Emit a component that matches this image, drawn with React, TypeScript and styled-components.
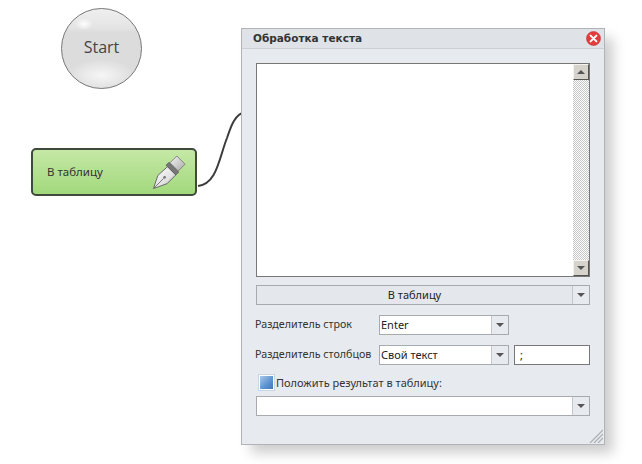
import React from 'react';
import styled, { createGlobalStyle } from 'styled-components';

const GlobalStyle = createGlobalStyle`
  html, body {
    margin: 0;
    padding: 0;
    background: #fff;
  }
`;

const uiFont = `"Noto Sans", "DejaVu Sans", sans-serif`;

function PenIcon() {
  return (
    <PenSvg viewBox="0 0 36 36">
      <defs>
        <linearGradient id="nib" x1="0" y1="0" x2="1" y2="1">
          <stop offset="0" stopColor="#ffffff" />
          <stop offset="0.6" stopColor="#e2e2e2" />
          <stop offset="1" stopColor="#999999" />
        </linearGradient>
        <linearGradient id="cap" x1="0" y1="0" x2="1" y2="1">
          <stop offset="0" stopColor="#f6f6f6" />
          <stop offset="1" stopColor="#a8a8a8" />
        </linearGradient>
      </defs>
      <path d="M1.5 34.5 L6 21 L16 12 L24.5 20.5 L15.5 29.5 Z" fill="url(#nib)" stroke="#666" strokeWidth="1" strokeLinejoin="round" />
      <path d="M2 34 L12 24" stroke="#666" strokeWidth="0.9" />
      <circle cx="13" cy="23" r="1.4" fill="#777" />
      <path d="M14.5 10.5 L17.5 7.5 L27.5 17.5 L24.5 20.5 Z" fill="#777" stroke="#555" strokeWidth="0.8" />
      <path d="M18.5 8 L25.5 1 L34 9.5 L27 16.5 Z" fill="url(#cap)" stroke="#777" strokeWidth="0.9" strokeLinejoin="round" />
    </PenSvg>
  );
}

function CloseIcon() {
  return (
    <CloseSvg viewBox="0 0 15 15">
      <circle cx="7.5" cy="7.5" r="7" fill="#e23c3c" stroke="#c63232" strokeWidth="0.6" />
      <path d="M4.6 4.6 L10.4 10.4 M10.4 4.6 L4.6 10.4" stroke="#fff" strokeWidth="2" strokeLinecap="round" />
    </CloseSvg>
  );
}

function Caret() {
  return <CaretGlyph />;
}

function Combo({ value, wide }: { value?: string; wide?: boolean }) {
  return (
    <ComboBox $wide={wide}>
      <ComboValue>{value}</ComboValue>
      <ComboArrow>
        <Caret />
      </ComboArrow>
    </ComboBox>
  );
}

function App() {
  return (
    <Canvas>
      <GlobalStyle />

      <Wire viewBox="0 0 60 90">
        <path d="M1 78 C20 76 22 50 30 30 C34 18 38 6 48 4" fill="none" stroke="#3c3c3c" strokeWidth="2" />
      </Wire>

      <StartNode>Start</StartNode>

      <TaskNode>
        <TaskTitle>В таблицу</TaskTitle>
        <PenIcon />
      </TaskNode>

      <Panel>
        <TitleBar>
          <Title>Обработка текста</Title>
          <CloseIcon />
        </TitleBar>

        <Body>
          <TextArea>
            <ScrollBar>
              <ScrollButton><ScrollUp /></ScrollButton>
              <ScrollTrack />
              <ScrollButton><Caret /></ScrollButton>
            </ScrollBar>
          </TextArea>

          <ActionButton>
            <ActionLabel>В таблицу</ActionLabel>
            <ComboArrow>
              <Caret />
            </ComboArrow>
          </ActionButton>

          <Row>
            <Label>Разделитель строк</Label>
            <Combo value="Enter" />
          </Row>

          <Row>
            <Label>Разделитель столбцов</Label>
            <Combo value="Свой текст" />
            <TextInput>;</TextInput>
          </Row>

          <CheckRow>
            <CheckBox />
            <CheckLabel>Положить результат в таблицу:</CheckLabel>
          </CheckRow>

          <Combo wide />
        </Body>

        <Grip viewBox="0 0 14 14">
          <path d="M1 14 L14 1 M5 14 L14 5 M9 14 L14 9" stroke="#a9adb2" strokeWidth="1.2" />
        </Grip>
      </Panel>
    </Canvas>
  );
}

const Canvas = styled.div`
  position: relative;
  width: 642px;
  height: 464px;
  overflow: hidden;
  background: #fff;
  font-family: ${uiFont};
`;

const Wire = styled.svg`
  position: absolute;
  left: 197px;
  top: 108px;
  width: 60px;
  height: 90px;
`;

const StartNode = styled.div`
  position: absolute;
  left: 61px;
  top: 8px;
  width: 81px;
  height: 81px;
  box-sizing: border-box;
  border-radius: 50%;
  border: 1px solid #777;
  padding-bottom: 4px;
  display: flex;
  align-items: center;
  justify-content: center;
  font-family: "Open Sans", sans-serif;
  font-size: 16px;
  color: #444;
  background:
    radial-gradient(ellipse 9px 6px at 28% 19%, rgba(255, 255, 255, 0.9), rgba(255, 255, 255, 0) 100%),
    radial-gradient(ellipse 34px 16px at 50% 84%, #f6f6f6 0%, rgba(246, 246, 246, 0) 100%),
    linear-gradient(#efefef 0%, #e4e4e4 24%, #dcdcdc 30%, #dcdcdc 100%);
`;

const TaskNode = styled.div`
  position: absolute;
  left: 31px;
  top: 148px;
  width: 166px;
  height: 48px;
  box-sizing: border-box;
  border: 2px solid #3f4a3c;
  border-radius: 5px;
  padding: 0 8px 0 14px;
  display: flex;
  align-items: center;
  justify-content: space-between;
  background: linear-gradient(#c5e8a6, #a2d97c);
`;

const TaskTitle = styled.span`
  font-size: 11.5px;
  padding-bottom: 2px;
  color: #333;
`;

const PenSvg = styled.svg`
  width: 35px;
  height: 35px;
`;

const Panel = styled.div`
  position: absolute;
  left: 241px;
  top: 28px;
  width: 364px;
  height: 417px;
  box-sizing: border-box;
  border: 1px solid #b0b4b8;
  background: #e7ebef;
  box-shadow: 9px 9px 12px -1px rgba(0, 0, 0, 0.2);
`;

const TitleBar = styled.div`
  height: 19px;
  padding: 0 3px 0 11px;
  display: flex;
  align-items: center;
  justify-content: space-between;
  background: #dfe3e8;
  border-bottom: 1px solid #cdd1d5;
`;

const Title = styled.span`
  font-family: "DejaVu Sans", sans-serif;
  font-size: 10.5px;
  font-weight: 700;
  padding-bottom: 2px;
  color: #333;
`;

const CloseSvg = styled.svg`
  width: 15px;
  height: 15px;
`;

const Body = styled.div`
  padding: 14px 14px 0 14px;
  display: flex;
  flex-direction: column;
`;

const TextArea = styled.div`
  height: 214px;
  box-sizing: border-box;
  border: 1px solid #777;
  background: #fff;
  display: flex;
  justify-content: flex-end;
`;

const ScrollBar = styled.div`
  width: 16px;
  display: flex;
  flex-direction: column;
`;

const ScrollButton = styled.div`
  height: 16px;
  box-sizing: border-box;
  flex: none;
  display: flex;
  align-items: center;
  justify-content: center;
  background: #d6d3cc;
  border: 1px solid;
  border-color: #f4f3ef #55534d #55534d #f4f3ef;
`;

const ScrollTrack = styled.div`
  flex: 1;
  background-color: #fff;
  background-image: conic-gradient(#c4c4c4 25%, #fff 0 50%, #c4c4c4 0 75%, #fff 0);
  background-size: 2px 2px;
`;

const ScrollUp = styled.span`
  width: 0;
  height: 0;
  border-left: 4px solid transparent;
  border-right: 4px solid transparent;
  border-bottom: 4px solid #555;
`;

const CaretGlyph = styled.span`
  width: 0;
  height: 0;
  border-left: 4px solid transparent;
  border-right: 4px solid transparent;
  border-top: 4px solid #555;
`;

const ActionButton = styled.div`
  margin-top: 8px;
  height: 20px;
  box-sizing: border-box;
  border: 1px solid #a7abb0;
  background: #e4e8ec;
  display: flex;
  align-items: stretch;
`;

const ActionLabel = styled.span`
  flex: 1;
  padding-bottom: 2px;
  display: flex;
  align-items: center;
  justify-content: center;
  font-size: 11px;
  color: #222;
`;

const Row = styled.div`
  margin-top: 10px;
  height: 20px;
  display: flex;
  align-items: center;
`;

const Label = styled.span`
  width: 124px;
  flex: none;
  margin-left: -1px;
  padding-bottom: 3px;
  font-size: 10.7px;
  white-space: nowrap;
  color: #333;
`;

const ComboBox = styled.div<{ $wide?: boolean }>`
  width: ${({ $wide }) => ($wide ? '100%' : '130px')};
  height: 20px;
  box-sizing: border-box;
  border: 1px solid #a7abb0;
  background: #fff;
  display: flex;
  align-items: stretch;
`;

const ComboValue = styled.span`
  flex: 1;
  padding: 0 0 2px 1px;
  display: flex;
  align-items: center;
  font-size: 11px;
  color: #222;
  white-space: nowrap;
`;

const ComboArrow = styled.span`
  width: 16px;
  flex: none;
  display: flex;
  align-items: center;
  justify-content: center;
  background: #e7ebef;
  border-left: 1px solid #c4c8cc;
`;

const TextInput = styled.div`
  margin-left: 5px;
  width: 76px;
  height: 20px;
  box-sizing: border-box;
  border: 1px solid #777;
  background: #fff;
  padding: 0 0 2px 5px;
  display: flex;
  align-items: center;
  font-size: 11px;
  color: #222;
`;

const CheckRow = styled.div`
  margin-top: 10px;
  height: 14px;
  margin-bottom: 7px;
  padding-left: 3px;
  display: flex;
  align-items: center;
`;

const CheckBox = styled.span`
  width: 13px;
  height: 13px;
  border: 1px solid #fff;
  box-shadow: 0 0 0 1px #c8d6e6;
  background: linear-gradient(135deg, #a9c8ea 0%, #5b92cf 60%, #3f78bb 100%);
`;

const CheckLabel = styled.span`
  margin-left: 2px;
  font-size: 11px;
  color: #333;
  white-space: nowrap;
`;

const Grip = styled.svg`
  position: absolute;
  right: 1px;
  bottom: 1px;
  width: 14px;
  height: 14px;
`;

export default App;
